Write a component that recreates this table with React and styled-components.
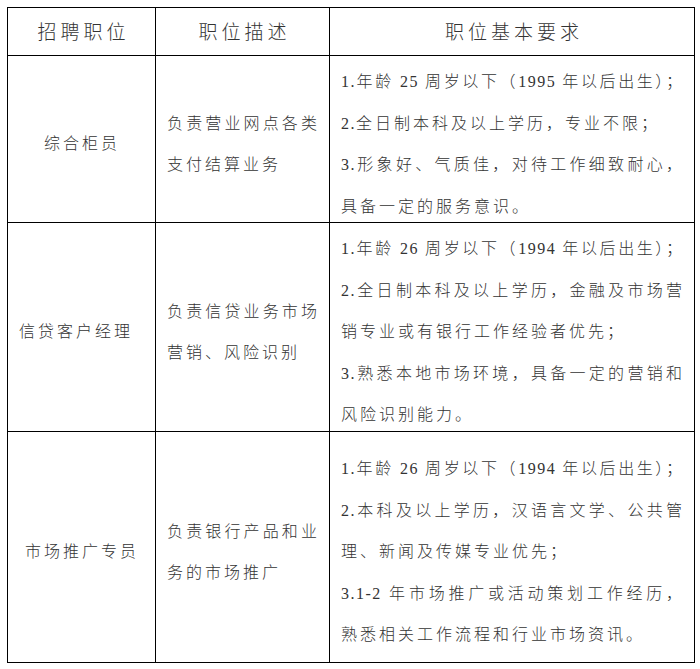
import React from "react";
import styled, { createGlobalStyle } from "styled-components";

const Global = createGlobalStyle`
  html, body { margin: 0; padding: 0; background: #ffffff; }
  body { font-family: "Liberation Serif", "Noto Sans CJK SC", serif; }
`;

const Table = styled.table`
  border-collapse: collapse;
  table-layout: fixed;
  width: 687px;
  margin: 7px 0 0 7px;
  color: #333333;
  font-family: "Liberation Serif", "Noto Sans CJK SC", serif;
`;

const Row = styled.tr`
  height: ${(p) => p.$h}px;
`;

const HeadCell = styled.th`
  border: 1px solid #000000;
  padding: 2px 0 0 4px;
  font-size: 19px;
  font-weight: 300;
  letter-spacing: 4px;
  text-align: center;
  vertical-align: middle;
  line-height: 24px;
`;

const Cell = styled.td`
  border: 1px solid #000000;
  padding: 0 10px 0 11px;
  vertical-align: middle;
  font-size: 16px;
  font-weight: 300;
  text-align: ${(p) => p.$align || "left"};
`;

const Line = styled.div`
  box-sizing: border-box;
  height: 41.5px;
  padding-top: 14px;
  line-height: 24px;
  letter-spacing: ${(p) => (p.$justify ? "2px" : "3px")};
  text-align: inherit;
  text-align-last: ${(p) => (p.$justify ? "justify" : "auto")};
`;

const Latin = styled.span`
  letter-spacing: 1.5px;
`;

const runs = (text) =>
  text.split(/([0-9.\- ]+)/).map((s, i) =>
    /^[0-9.\- ]+$/.test(s) ? <Latin key={i}>{s}</Latin> : s
  );

const rows = [
  {
    h: 167,
    title: "综合柜员",
    align: "center",
    desc: [["负责营业网点各类", true], ["支付结算业务", false]],
    req: [
      ["1.年龄 25 周岁以下（1995 年以后出生）；", true],
      ["2.全日制本科及以上学历，专业不限；", false],
      ["3.形象好、气质佳，对待工作细致耐心，", true],
      ["具备一定的服务意识。", false],
    ],
  },
  {
    h: 209,
    title: "信贷客户经理",
    align: "left",
    desc: [["负责信贷业务市场", true], ["营销、风险识别", false]],
    req: [
      ["1.年龄 26 周岁以下（1994 年以后出生）；", true],
      ["2.全日制本科及以上学历，金融及市场营", true],
      ["销专业或有银行工作经验者优先；", false],
      ["3.熟悉本地市场环境，具备一定的营销和", true],
      ["风险识别能力。", false],
    ],
  },
  {
    h: 231,
    title: "市场推广专员",
    align: "center",
    desc: [["负责银行产品和业", true], ["务的市场推广", false]],
    req: [
      ["1.年龄 26 周岁以下（1994 年以后出生）；", true],
      ["2.本科及以上学历，汉语言文学、公共管", true],
      ["理、新闻及传媒专业优先；", false],
      ["3.1-2 年市场推广或活动策划工作经历，", true],
      ["熟悉相关工作流程和行业市场资讯。", false],
    ],
  },
];

const Lines = ({ items }) =>
  items.map(([t, j], i) => (
    <Line key={i} $justify={j}>
      {runs(t)}
    </Line>
  ));

export default function App() {
  return (
    <>
      <Global />
      <Table>
        <colgroup>
          <col style={{ width: 148 }} />
          <col style={{ width: 174 }} />
          <col style={{ width: 365 }} />
        </colgroup>
        <tbody>
          <Row $h={48}>
            <HeadCell>招聘职位</HeadCell>
            <HeadCell>职位描述</HeadCell>
            <HeadCell>职位基本要求</HeadCell>
          </Row>
          {rows.map((r) => (
            <Row key={r.title} $h={r.h}>
              <Cell $align={r.align}>
                <Line>{r.title}</Line>
              </Cell>
              <Cell>
                <Lines items={r.desc} />
              </Cell>
              <Cell>
                <Lines items={r.req} />
              </Cell>
            </Row>
          ))}
        </tbody>
      </Table>
    </>
  );
}
